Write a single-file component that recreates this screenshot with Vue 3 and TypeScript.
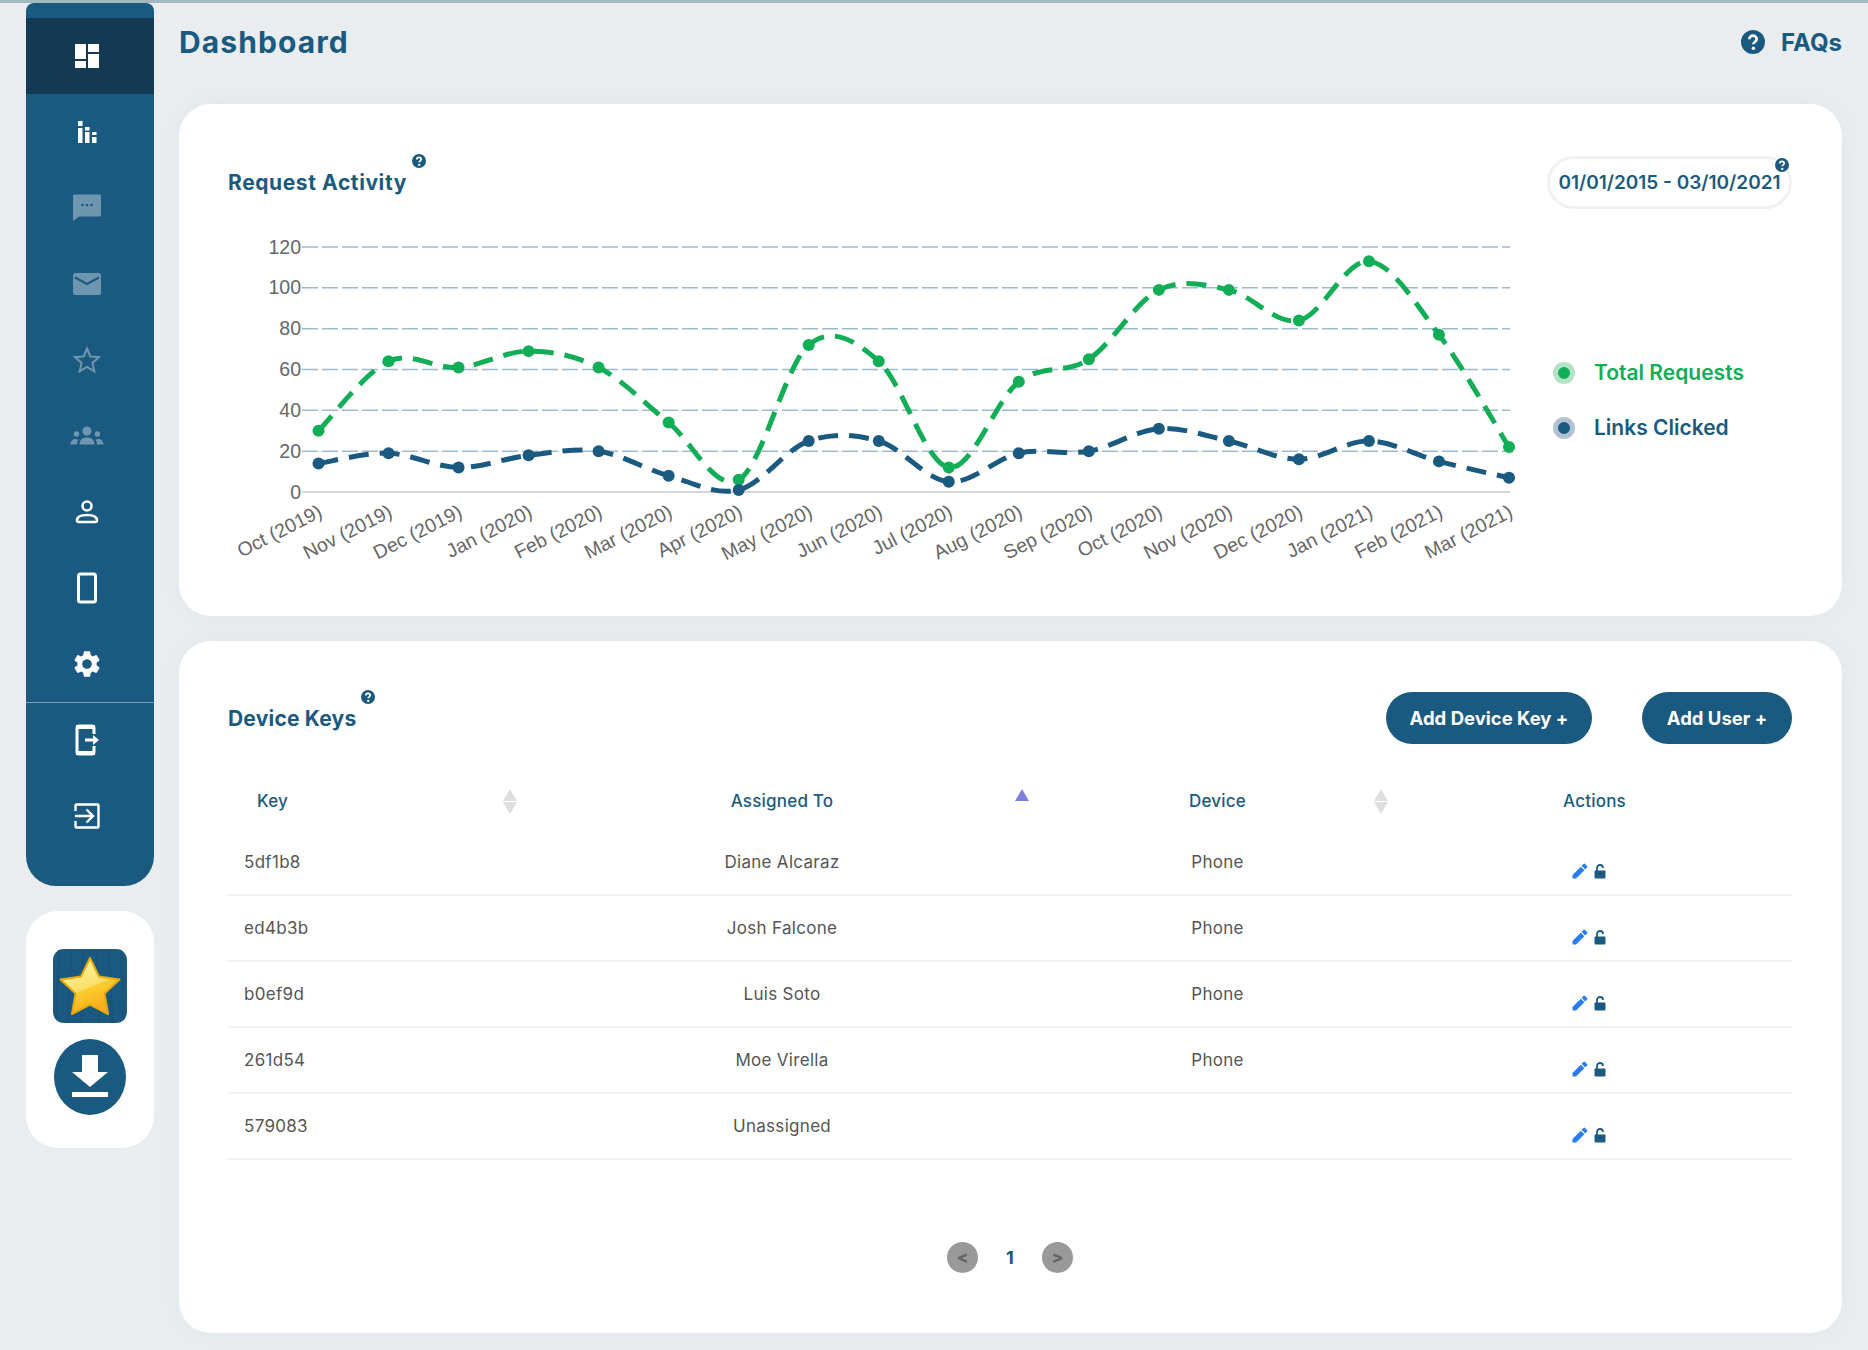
<script setup lang="ts">
const months = ['Oct (2019)','Nov (2019)','Dec (2019)','Jan (2020)','Feb (2020)','Mar (2020)','Apr (2020)','May (2020)','Jun (2020)','Jul (2020)','Aug (2020)','Sep (2020)','Oct (2020)','Nov (2020)','Dec (2020)','Jan (2021)','Feb (2021)','Mar (2021)']
const green = [30,64,61,69,61,34,6,72,64,12,54,65,99,99,84,113,77,22]
const blue = [14,19,12,18,20,8,1,25,25,5,19,20,31,25,16,25,15,7]
const yTop = 22
const yBase = 267
const px = (i: number) => 90.5 + i * 70.03
const py = (v: number) => yBase - (v * (yBase - yTop)) / 120
const ticks = [120, 100, 80, 60, 40, 20]

function curve(vals: number[]): string {
  const p = vals.map((v, i) => [px(i), py(v)])
  let d = `M${p[0][0]} ${p[0][1]}`
  for (let i = 0; i < p.length - 1; i++) {
    const a = p[Math.max(i - 1, 0)]
    const b = p[i]
    const c = p[i + 1]
    const e = p[Math.min(i + 2, p.length - 1)]
    const c1x = b[0] + (c[0] - a[0]) / 6
    const c1y = b[1] + (c[1] - a[1]) / 6
    const c2x = c[0] - (e[0] - b[0]) / 6
    const c2y = c[1] - (e[1] - b[1]) / 6
    d += ` C${c1x.toFixed(1)} ${c1y.toFixed(1)} ${c2x.toFixed(1)} ${c2y.toFixed(1)} ${c[0].toFixed(1)} ${c[1].toFixed(1)}`
  }
  return d
}

const series = [
  { color: '#12ad57', vals: green, d: curve(green) },
  { color: '#1b5a80', vals: blue, d: curve(blue) },
]

const rows = [
  { key: '5df1b8', user: 'Diane Alcaraz', device: 'Phone' },
  { key: 'ed4b3b', user: 'Josh Falcone', device: 'Phone' },
  { key: 'b0ef9d', user: 'Luis Soto', device: 'Phone' },
  { key: '261d54', user: 'Moe Virella', device: 'Phone' },
  { key: '579083', user: 'Unassigned', device: '' },
]
</script>

<template>
  <div class="page">
    <aside class="rail">
      <nav class="side">
        <div class="item active">
          <svg width="26" height="26" viewBox="0 0 26 26"><g fill="#fff"><rect x="1" y="1" width="11" height="15"/><rect x="1" y="18" width="11" height="7"/><rect x="14" y="1" width="11" height="8"/><rect x="14" y="11" width="11" height="14"/></g></svg>
        </div>
        <div class="item">
          <svg width="26" height="26" viewBox="0 0 26 26"><g fill="#fff"><rect x="4" y="2" width="4.500" height="5"/><rect x="4" y="9" width="4.500" height="15"/><rect x="11" y="8" width="4.500" height="3.500"/><rect x="11" y="13" width="4.500" height="11"/><rect x="18" y="13" width="4.500" height="3"/><rect x="18" y="18" width="4.500" height="6"/></g></svg>
        </div>
        <div class="item">
          <svg width="30" height="28" viewBox="0 3 30 28"><path fill="#6f96af" d="M3 3.500h25a1.500 1.500 0 0 1 1 1.500v19a1.500 1.500 0 0 1-1.500 1.500H7L1 30V5a1.500 1.500 0 0 1 2-1.500z"/><g fill="#1b5a80"><circle cx="10.500" cy="14" r="1.300"/><circle cx="15" cy="14" r="1.300"/><circle cx="19.500" cy="14" r="1.300"/></g></svg>
        </div>
        <div class="item">
          <svg width="30" height="24" viewBox="0 0 30 24"><rect x="1" y="1" width="28" height="22" rx="2.500" fill="#6f96af"/><path d="M3 5.500 15 12 27 5.500" fill="none" stroke="#1b5a80" stroke-width="2.200"/></svg>
        </div>
        <div class="item">
          <svg width="28" height="28" viewBox="0 0 28 28"><path d="M14 2.500 17.300 10.500 25.900 11.200 19.400 16.900 21.400 25.300 14 20.800 6.600 25.300 8.600 16.900 2.100 11.200 10.700 10.500Z" fill="none" stroke="#6f96af" stroke-width="2"/></svg>
        </div>
        <div class="item">
          <svg width="34" height="20" viewBox="0 0 34 20"><g fill="#6f96af"><circle cx="17" cy="5" r="4.500"/><circle cx="6.500" cy="8" r="2.700"/><circle cx="27.500" cy="8" r="2.700"/><path d="M9.500 18.500c0-4.500 3-7 7.500-7s7.500 2.500 7.500 7z"/><path d="M.5 18.500c0-3 2-5.500 5-5.500 1 0 2 .2 2.700.7-.8 1.400-1.200 3-1.200 4.800z"/><path d="M33.500 18.500c0-3-2-5.500-5-5.500-1 0-2 .2-2.700.7.800 1.400 1.200 3 1.200 4.800z"/></g></svg>
        </div>
        <div class="item">
          <svg width="26" height="26" viewBox="0 0 26 26"><g fill="none" stroke="#fff" stroke-width="2.500"><circle cx="13" cy="7" r="4.500"/><path d="M3 21.500c0-3.500 4-5.500 10-5.500s10 2 10 5.500c0 1-.5 1.500-1.500 1.500h-17c-1 0-1.500-.5-1.500-1.500z"/></g></svg>
        </div>
        <div class="item">
          <svg width="22" height="32" viewBox="0 0 22 32"><rect x="2.500" y="2" width="17" height="28" rx="2" fill="none" stroke="#fff" stroke-width="3"/></svg>
        </div>
        <div class="item">
          <svg width="32" height="32" viewBox="0 0 24 24"><path fill="#fff" d="M19.140 12.940c.04-.3.06-.61.06-.94 0-.32-.02-.64-.07-.94l2.030-1.580a.49.49 0 0 0 .12-.61l-1.920-3.320a.488.488 0 0 0-.59-.22l-2.390.96c-.5-.38-1.030-.7-1.620-.94l-.36-2.540a.484.484 0 0 0-.48-.41h-3.840c-.24 0-.43.17-.47.41l-.36 2.540c-.59.24-1.130.57-1.620.94l-2.390-.96c-.22-.08-.47 0-.59.22L2.740 8.870c-.12.21-.08.47.12.61l2.030 1.580c-.05.3-.09.63-.09.94s.02.64.07.94l-2.030 1.580a.49.49 0 0 0-.12.61l1.920 3.320c.12.22.37.29.59.22l2.390-.96c.5.38 1.030.7 1.620.94l.36 2.540c.05.24.24.41.48.41h3.840c.24 0 .44-.17.47-.41l.36-2.540c.59-.24 1.130-.56 1.620-.94l2.390.96c.22.08.47 0 .59-.22l1.920-3.320c.12-.22.07-.47-.12-.61l-2.010-1.580zM12 15.600c-1.980 0-3.600-1.620-3.600-3.600s1.620-3.600 3.600-3.600 3.600 1.620 3.600 3.600-1.620 3.600-3.600 3.600z"/></svg>
        </div>
        <div class="divider"></div>
        <div class="item">
          <svg width="26" height="32" viewBox="0 0 26 32"><path fill="none" stroke="#fff" stroke-width="3" d="M20 10V4a2 2 0 0 0-2-2H5a2 2 0 0 0-2 2v24a2 2 0 0 0 2 2h13a2 2 0 0 0 2-2v-6"/><rect x="2" y="1" width="19" height="4" fill="#fff"/><rect x="2" y="27" width="19" height="4" fill="#fff"/><path fill="#fff" d="M11 14.500h8V11l6 5-6 5v-3.500h-8z"/></svg>
        </div>
        <div class="item">
          <svg width="26" height="26" viewBox="0 0 26 26"><g fill="none" stroke="#fff" stroke-width="2.400"><path d="M1.500 8V2.500a1 1 0 0 1 1-1h21a1 1 0 0 1 1 1v21a1 1 0 0 1-1 1h-21a1 1 0 0 1-1-1V18"/><path d="M1 13h17M12.500 6.500 19 13l-6.500 6.500"/></g></svg>
        </div>
      </nav>
      <div class="apps">
        <svg class="star-app" width="74" height="74" viewBox="0 0 74 74">
          <defs>
            <linearGradient id="starFill" x1="0.3" y1="0.1" x2="0.7" y2="1">
              <stop offset="0" stop-color="#fdf29a"/>
              <stop offset="0.45" stop-color="#fbe06a"/>
              <stop offset="0.5" stop-color="#fccb2c"/>
              <stop offset="1" stop-color="#f9a51c"/>
            </linearGradient>
            <clipPath id="appClip"><rect width="74" height="74" rx="11"/></clipPath>
          </defs>
          <g clip-path="url(#appClip)">
            <rect width="74" height="74" fill="#1b5a80"/>
            <g stroke="#1a5478" stroke-width="3"><path d="M6 0 3 74M18 0 15 74M30 0 28 74M44 0 46 74M56 0 59 74M68 0 71 74"/></g>
          </g>
          <path d="M37 9 46 27.500 66.500 30.500 51.500 44.500 55 65 37 55.500 19 65 22.500 44.500 7.500 30.500 28 27.500Z" fill="url(#starFill)" stroke="#e7a90f" stroke-width="2" stroke-linejoin="round"/>
        </svg>
        <svg width="72" height="76" viewBox="0 0 72 76">
          <ellipse cx="36" cy="38" rx="36" ry="38" fill="#1b5a80"/>
          <path d="M28 16h16v17h10L36 48 18 33h10z" fill="#fff"/>
          <rect x="18" y="53" width="36" height="5" fill="#fff"/>
        </svg>
      </div>
    </aside>

    <main class="main">
      <header class="top">
        <h1>Dashboard</h1>
        <div class="faqs">
          <svg class="help" width="24" height="24" viewBox="0 0 24 24"><circle cx="12" cy="12" r="12" fill="#1b5a80"/><path d="M8.300 9.300a3.700 3.700 0 0 1 7.400 0c0 2.500-3.300 2.500-3.300 5" fill="none" stroke="#fff" stroke-width="2.600"/><circle cx="12.400" cy="18.300" r="1.700" fill="#fff"/></svg>
          <span>FAQs</span>
        </div>
      </header>

      <section class="card activity">
        <div class="card-head">
          <h2 class="spaced">Request Activity
            <svg class="help sup" width="14" height="14" viewBox="0 0 24 24"><circle cx="12" cy="12" r="12" fill="#1b5a80"/><path d="M8.300 9.300a3.700 3.700 0 0 1 7.400 0c0 2.500-3.300 2.500-3.300 5" fill="none" stroke="#fff" stroke-width="3"/><circle cx="12.400" cy="18.600" r="2" fill="#fff"/></svg>
          </h2>
          <div class="range">
            01/01/2015 - 03/10/2021
            <svg class="help pill-help" width="14" height="14" viewBox="0 0 24 24"><circle cx="12" cy="12" r="12" fill="#1b5a80"/><path d="M8.300 9.300a3.700 3.700 0 0 1 7.400 0c0 2.500-3.300 2.500-3.300 5" fill="none" stroke="#fff" stroke-width="3"/><circle cx="12.400" cy="18.600" r="2" fill="#fff"/></svg>
          </div>
        </div>
        <div class="chart-row">
          <svg class="chart" width="1300" height="350" viewBox="0 0 1300 350">
            <g v-for="t in ticks" :key="t">
              <line x1="74" x2="1282" :y1="py(t)" :y2="py(t)" stroke="#9db9d0" stroke-width="1.500" stroke-dasharray="16 4"/>
            </g>
            <line x1="74" x2="1282" :y1="yBase" :y2="yBase" stroke="#c8c8c8" stroke-width="1.500"/>
            <text v-for="t in [...ticks, 0]" :key="'t' + t" class="tick" x="73" :y="py(t) + 6.500" text-anchor="end">{{ t }}</text>
            <text v-for="(m, i) in months" :key="m" class="tick" text-anchor="end" :transform="`translate(${px(i) + 5} ${yBase + 24}) rotate(-27)`">{{ m }}</text>
            <g v-for="s in series" :key="s.color">
              <path :d="s.d" fill="none" :stroke="s.color" stroke-width="5" stroke-dasharray="20 11"/>
              <circle v-for="(v, i) in s.vals" :key="i" :cx="px(i)" :cy="py(v)" r="6" :fill="s.color"/>
            </g>
          </svg>
          <ul class="legend">
            <li class="g"><i></i>Total Requests</li>
            <li class="b"><i></i>Links Clicked</li>
          </ul>
        </div>
      </section>

      <section class="card keys">
        <div class="card-head keys-head">
          <h2>Device Keys
            <svg class="help sup" width="14" height="14" viewBox="0 0 24 24"><circle cx="12" cy="12" r="12" fill="#1b5a80"/><path d="M8.300 9.300a3.700 3.700 0 0 1 7.400 0c0 2.500-3.300 2.500-3.300 5" fill="none" stroke="#fff" stroke-width="3"/><circle cx="12.400" cy="18.600" r="2" fill="#fff"/></svg>
          </h2>
          <div class="btns">
            <button class="wide">Add Device Key +</button>
            <button>Add User +</button>
          </div>
        </div>
        <table>
          <colgroup><col class="c1"/><col class="c2"/><col class="c3"/><col class="c4"/></colgroup>
          <thead>
            <tr>
              <th class="first">Key<span class="sort"><b class="up"></b><b class="down"></b></span></th>
              <th>Assigned To<span class="sort asc"><b class="up"></b></span></th>
              <th>Device<span class="sort"><b class="up"></b><b class="down"></b></span></th>
              <th>Actions</th>
            </tr>
          </thead>
          <tbody>
            <tr v-for="r in rows" :key="r.key">
              <td class="first">{{ r.key }}</td>
              <td>{{ r.user }}</td>
              <td>{{ r.device }}</td>
              <td class="acts">
                <svg width="18" height="18" viewBox="0 0 24 24"><path fill="#2a7def" d="M2 17.250V22h4.750L17.810 10.940l-4.750-4.750L2 17.250zM21.710 7.040a1 1 0 0 0 0-1.410l-3.340-3.340a1 1 0 0 0-1.410 0l-2.830 2.830 4.750 4.750 2.830-2.830z"/></svg>
                <svg width="12" height="15" viewBox="0 0 12 15"><path d="M3 7V4a3 3 0 0 1 6 0" fill="none" stroke="#1b5a80" stroke-width="1.800"/><rect x="0.500" y="6.500" width="11" height="8" rx="1" fill="#1b5a80"/></svg>
              </td>
            </tr>
          </tbody>
        </table>
        <div class="pager">
          <span class="pg">&lt;</span>
          <span class="num">1</span>
          <span class="pg">&gt;</span>
        </div>
      </section>
    </main>
  </div>
</template>

<style>
html, body { margin: 0; background: #e9edf0; }
</style>

<style scoped>
.page {
  display: flex;
  align-items: flex-start;
  width: 1868px;
  height: 1350px;
  box-sizing: border-box;
  border-top: 3px solid #a3b8bf;
  background: #e9edf0;
  font-family: Inter, "Noto Sans", sans-serif;
  overflow: hidden;
}
.rail {
  width: 128px;
  margin-left: 26px;
  display: flex;
  flex-direction: column;
  gap: 25px;
  flex: none;
}
.side {
  background: #1b5a80;
  border-radius: 8px 8px 30px 30px;
  padding: 15px 0 32px;
  height: 883px;
  box-sizing: border-box;
}
.item { height: 76px; display: flex; align-items: center; justify-content: center; padding-right: 6px; box-sizing: border-box; }
.item.active { background: #133a52; }
.divider { height: 0; border-top: 1px solid #7a9db4; margin-top: -0.5px; margin-bottom: -0.5px; }
.apps {
  background: #fff;
  border-radius: 32px;
  height: 237px;
  box-sizing: border-box;
  padding-top: 38px;
  display: flex;
  flex-direction: column;
  align-items: center;
  gap: 16px;
}
.star-app { display: block; }
.main { width: 1663px; margin-left: 25px; flex: none; display: flex; flex-direction: column; }
.top { height: 101px; display: flex; justify-content: space-between; align-items: flex-start; padding-top: 20px; box-sizing: border-box; }
h1 { margin: 0; font-size: 30px; line-height: 38px; font-weight: 700; color: #1b5a80; letter-spacing: 1.100px; }
.faqs { display: flex; align-items: center; gap: 16px; height: 38px; font-size: 24px; font-weight: 700; color: #1b5a80; }
.card { background: #fff; border-radius: 32px; box-shadow: 0 0 24px rgba(120, 140, 160, 0.06); }
.activity { height: 512px; padding: 52px 50px 0 49px; box-sizing: border-box; }
.keys { height: 692px; margin-top: 25px; padding: 51px 50px 0 49px; box-sizing: border-box; }
.card-head { display: flex; justify-content: space-between; align-items: center; height: 53px; }
.keys-head { height: 52px; }
h2 { margin: 0; font-size: 21px; font-weight: 700; color: #1b5a80; position: relative; letter-spacing: 0.2px; }
h2.spaced { letter-spacing: 0.6px; }
.sup { position: absolute; right: -19px; top: -16px; }
.range {
  position: relative;
  width: 245px;
  height: 53px;
  box-sizing: border-box;
  border: 3px solid #f1f1f1;
  border-radius: 27px;
  display: flex;
  align-items: center;
  justify-content: center;
  font-size: 19px;
  font-weight: 600;
  color: #1b5a80;
  white-space: nowrap;
}
.pill-help { position: absolute; right: 0; top: -1px; }
.chart-row { display: flex; align-items: flex-start; margin-top: 16px; }
.chart { flex: none; display: block; }
.tick { font-family: "Liberation Sans", Arial, sans-serif; font-size: 19.5px; fill: #666; }
.legend { list-style: none; margin: 134px 0 0 25px; padding: 0; display: flex; flex-direction: column; gap: 28px; font-size: 21px; font-weight: 600; }
.legend li { display: flex; align-items: center; gap: 19px; height: 27px; white-space: nowrap; }
.legend i { width: 12px; height: 12px; border-radius: 50%; border: 5px solid; box-sizing: content-box; }
.legend .g { color: #12ad57; }
.legend .g i { background: #12ad57; border-color: #b3e3c8; }
.legend .b { color: #1b5a80; }
.legend .b i { background: #1b5a80; border-color: #b1c3d2; }
.btns { display: flex; gap: 50px; }
button {
  height: 52px;
  width: 150px;
  border: 0;
  border-radius: 26px;
  background: #1b5a80;
  color: #fff;
  font-family: inherit;
  font-size: 18.5px;
  font-weight: 700;
  padding: 0;
}
button.wide { width: 206px; }
table { width: 1564px; margin-top: 28px; border-collapse: collapse; table-layout: fixed; font-size: 17px; }
.c1 { width: 298px; }
.c2 { width: 512px; }
.c3 { width: 359px; }
.c4 { width: 395px; }
th { height: 58px; padding: 0; font-weight: 500; color: #1b5a80; text-align: center; position: relative; letter-spacing: 0.2px; }
th.first { text-align: left; padding-left: 29px; }
td { height: 63px; padding: 0 0 1px; border-bottom: 2px solid #f1f1f1; text-align: center; color: #555; letter-spacing: 0.3px; }
td.first { text-align: left; padding-left: 16px; }
td.acts { padding: 16px 13px 0 0; height: 48px; }
td.acts svg { margin: 0 2.500px; vertical-align: middle; }
.sort { position: absolute; right: 8px; top: 17px; width: 15px; display: flex; flex-direction: column; gap: 1px; }
.sort b { display: block; width: 0; height: 0; border-left: 7.500px solid transparent; border-right: 7.500px solid transparent; }
.sort .up { border-bottom: 12px solid #dedede; }
.sort .down { border-top: 12px solid #dedede; }
.sort.asc .up { border-bottom-color: #7f7fdf; }
.pager { display: flex; justify-content: center; align-items: center; margin: 82px 0 0 0; height: 30px; }
.pg {
  width: 31px;
  height: 31px;
  border-radius: 50%;
  background: #999;
  color: #666;
  font-weight: 800;
  font-size: 17px;
  display: flex;
  align-items: center;
  justify-content: center;
}
.num { width: 64px; text-align: center; color: #1b5a80; font-weight: 700; font-size: 18px; }
</style>
